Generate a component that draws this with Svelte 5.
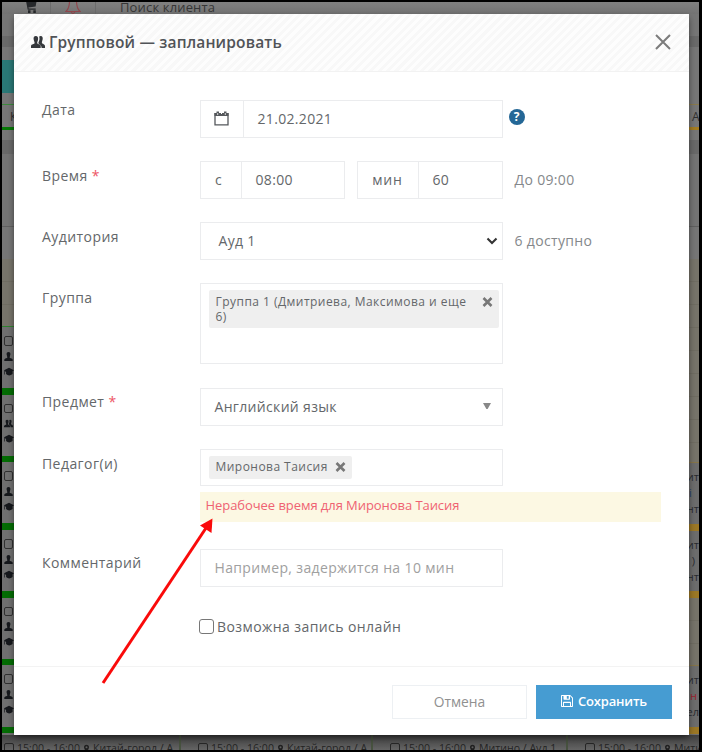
<script>
  const lessons = [
    { group: false }, { group: true }, { group: false },
    { group: false }, { group: false }, { group: false }
  ];
  const slots = [
    { text: '15:00 - 16:00', place: 'Китай-город / А' },
    { text: '15:00 - 16:00', place: 'Китай-город / А' },
    { text: '15:00 - 16:00', place: 'Митино / Ауд 1' },
    { text: '15:00 - 16:00', place: 'Митино / Ауд' }
  ];
</script>

{#snippet person()}
  <svg class="person" viewBox="0 0 12 12"><path d="M6 0C3.9 0 3.3 1.5 3.5 3.3C3.7 4.9 4.4 6 4.5 7.3C4.5 8.3 1 8.300.4 10V12H11.6V10C11 8.300 7.500 8.300 7.5 7.3C7.6 6 8.3 4.9 8.5 3.3C8.7 1.5 8.1 0 6 0Z" /></svg>
{/snippet}

{#snippet people()}
  <svg class="people" viewBox="0 0 14 12"><path d="M4.8 0C2.9 0 2.4 1.4 2.6 3.1C2.8 4.9 3.6 5.8 3.6 7C3.5 8.2.3 8 0 10V12H9.7V10C9.4 8 6.3 8.2 6.2 7C6.2 5.8 7 4.9 7.1 3.1C7.3 1.4 6.8 0 4.8 0ZM8.1.8C8.5.3 9 0 9.7 0C11.5 0 11.9 1.5 11.7 3.1C11.5 4.7 10.9 5.6 10.9 6.8C11 8 13.8 8 14 10V12H10.6C10.6 9.8 9.7 8.7 7.4 7.4C7.3 6.1 8.4 5 8.5 3.1C8.6 2.1 8.4 1.4 8.1.8Z" /></svg>
{/snippet}

{#snippet cross()}
  <svg class="cross" viewBox="0 0 11 10"><path d="M1.500 1L9.500 9M9.500 1L1.500 9" /></svg>
{/snippet}

<div class="frame">
  <div class="topbar">
    <svg class="cart" viewBox="0 0 12 13"><path d="M0 0H11.6L10.6 5.5L3.4 6.4L3.7 7.5H10.7V8.7H2.7L1 0ZM3 9.3H5.5V12H3ZM8.3 9.3H10.8V12H8.3Z" /></svg>
    <i></i>
    <svg class="bell" viewBox="0 0 16 13"><path d="M4.5 0C4.3 4 3.8 7 1 9.5H15C12.2 7 11.7 4 11.5 0M6.2 10Q8 13 9.8 10" /></svg>
    <i></i>
    <span>Поиск клиента</span>
  </div>

  <div class="middle">
    <div class="strip left">
      <div class="b1"></div><div class="b2"></div><div class="b3"></div>
      <div class="teal"></div><div class="b4"></div>
      <div class="head">К</div>
      <div class="b5"></div><div class="b6"></div><div class="b7"></div><div class="b8"></div>
      <div class="tan"></div>
      {#each lessons as lesson}
        <div class="lesson">
          <b></b>
          {#if lesson.group}{@render people()}{:else}{@render person()}{/if}
          <svg class="cap" viewBox="0 0 12 10"><path d="M6 0L12 3L10.3 4V7.5Q6 11 2.5 7.5V5L1.2 4.2V8H.4V3.4L0 3Z" /></svg>
          <em></em>
        </div>
      {/each}
    </div>

    <section class="modal">
      <header>
        {@render people()}
        <h1>Групповой — запланировать</h1>
        <svg class="close" viewBox="0 0 16 16"><path d="M1 1L15 15M15 1L1 15" /></svg>
      </header>

      <div class="body">
        <div class="row date">
          <label for="date">Дата</label>
          <div class="box addon cal">
            <svg viewBox="0 0 15 15"><path class="line" d="M1 2.7H14V13.8H1Z" /><path d="M.5 2H14.5V5H.5ZM2.500 0.500H5V2H2.500ZM10 0.500H12.500V2H10Z" /><path class="dots" d="M3.7 2.300V3.800M7.5 1.8V3M11.3 2.300V3.800" /></svg>
          </div>
          <div class="box value grow" id="date"><span>21.02.2021</span></div>
          <div class="help">?</div>
        </div>

        <div class="row time">
          <label for="time">Время <sup>*</sup></label>
          <div class="box addon from">с</div>
          <div class="box value start" id="time"><span>08:00</span></div>
          <div class="box addon min">мин</div>
          <div class="box value length"><span>60</span></div>
          <div class="note">До 09:00</div>
        </div>

        <div class="row room">
          <label for="room">Аудитория</label>
          <div class="box value full select" id="room">
            <span>Ауд 1</span>
            <svg viewBox="0 0 12 8"><path d="M1.5 1.5L6 6L10.5 1.5" /></svg>
          </div>
          <div class="note">6 доступно</div>
        </div>

        <div class="row group">
          <label for="group">Группа</label>
          <div class="box tags" id="group">
            <div class="tag wide"><span>Группа 1 (Дмитриева, Максимова и еще<br />6)</span>{@render cross()}</div>
          </div>
        </div>

        <div class="row subject">
          <label for="subject">Предмет <sup>*</sup></label>
          <div class="box value full" id="subject">
            <span>Английский язык</span>
            <svg class="tri" viewBox="0 0 8 6"><path d="M0 0H8L4.6 6H3.4Z" /></svg>
          </div>
        </div>

        <div class="row teacher">
          <label for="teacher">Педагог(и)</label>
          <div class="box tags" id="teacher">
            <div class="tag"><span>Миронова Таисия</span>{@render cross()}</div>
          </div>
        </div>
        <div class="warn"><span>Нерабочее время для Миронова Таисия</span></div>

        <div class="row comment">
          <label for="comment">Комментарий</label>
          <div class="box value full" id="comment"><span>Например, задержится на 10 мин</span></div>
        </div>

        <div class="online"><b></b><span>Возможна запись онлайн</span></div>
      </div>

      <footer>
        <button class="cancel"><span>Отмена</span></button>
        <button class="save">
          <svg viewBox="0 0 12 12"><path fill-rule="evenodd" d="M.8 0H9.2L12 2.8V11.2Q12 12 11.2 12H.8Q0 12 0 11.2V.8Q0 0 .8 0ZM1 1V11H2V7.4Q2 6.8 2.6 6.8H9.4Q10 6.8 10 7.4V11H11V3.2L9 1.1V4Q9 4.7 8.3 4.7H3.2Q2.5 4.7 2.5 4V1ZM5.8 1V3.7H7.7V1ZM3 7.9V11H9V7.9Z" /></svg>
          <span>Сохранить</span>
        </button>
      </footer>
    </section>

    <div class="strip right">
      <div class="b1"></div><div class="b2"></div><div class="b9"></div>
      <div class="head">А</div>
      <div class="b5"></div><div class="b6"></div><div class="b7"></div><div class="b8"></div>
      <div class="tan"></div>
      <div class="card"><span>ит</span><span class="blue">і</span><span>нт</span></div>
      <div class="card"><span>ит</span><span class="paren">)</span><span>нт</span></div>
      <div class="tan short"></div>
      <div class="card last"><span>ит</span><span class="red">н</span><span>ел</span></div>
    </div>
  </div>

  <div class="bottom">
    {#each slots as slot}
      <div class="slot">
        <b></b><span>{slot.text}</span>
        <svg viewBox="0 0 6 9"><path fill-rule="evenodd" d="M3 0C1 0 0 1.3 0 3C0 5.4 3 9 3 9S6 5.4 6 3C6 1.3 5 0 3 0ZM3 1.7A1.2 1.2 0 1 1 3 4.1A1.2 1.2 0 1 1 3 1.7" /></svg>
        <span class="place">{slot.place}</span>
      </div>
    {/each}
  </div>

  <svg class="arrow" viewBox="0 0 120 172"><path class="shaft" d="M3 168L106 13" /><path d="M112.500 3.500L111.500 18L100 10.500Z" /></svg>
</div>

<style>
  * { box-sizing: border-box; }
  .frame {
    position: relative; width: 702px; height: 752px; overflow: hidden;
    border: solid #000; border-width: 2px 3px 2px 2px;
    font-family: "Open Sans", "Noto Sans", sans-serif; color: #64676a;
    background: #676767; display: flex; flex-direction: column;
  }
  svg { display: block; flex: none; }

  .topbar { height: 12px; flex: none; display: flex; background: linear-gradient(#808080, #737373); overflow: hidden; }
  .cart { width: 12px; height: 13px; margin-left: 23px; margin-top: -1px; fill: #26282b; }
  .topbar i { width: 1px; height: 12px; background: #6c6c6c; }
  .cart + i { margin-left: 13px; }
  .bell { width: 16px; height: 13px; margin: 0 14px 0 14px; fill: none; stroke: #90484e; stroke-width: 1.2; }
  .topbar span { margin-left: 24px; margin-top: -4px; font-size: 13px; line-height: 18px; color: #363636; letter-spacing: .15px; white-space: nowrap; }

  .middle { display: flex; height: 721px; flex: none; }
  .strip { flex: none; height: 721px; overflow: hidden; background: #707070; }
  .left { width: 12px; }
  .right { width: 10px; }
  .b1 { height: 22px; background: #767676; }
  .b2 { height: 11px; background: #6a6a6a; }
  .b3 { height: 13px; background: #777; }
  .b9 { height: 58px; background: #777; border-bottom: 1px solid #8a7a4c; }
  .teal { height: 33px; background: #2a7876; }
  .b4 { height: 12px; background: #777; border-bottom: 1px solid #3c8a3c; }
  .head { height: 22px; font-size: 12px; line-height: 23px; padding-left: 8px; color: #303030; background: #777; }
  .right .head { padding-left: 3px; }
  .b5 { height: 3px; background: #077a07; }
  .right .b5 { background: #a57d22; }
  .b6 { height: 10px; background: #777; }
  .b7 { height: 14px; background: #696969; }
  .b8 { height: 105px; background: linear-gradient(#747474 72px, #606060 72px, #606060 73px, #767676 73px); }
  .tan { height: 68px; background: repeating-linear-gradient(#77746a 0 22px, #706d62 22px 23px); }
  .left .tan { border-bottom: 1px solid #2f822f; }
  .right .tan { height: 204px; border-bottom: 1px solid #867549; }
  .right .short { height: 68px; }

  .lesson { height: 67.7px; display: flex; flex-direction: column; align-items: flex-start; padding: 9px 0 0 2px; }
  .lesson b { width: 9px; height: 10px; border: 1px solid #303030; border-radius: 2px; }
  .lesson .person, .lesson .people { width: 9px; height: 11px; margin-top: 5px; fill: #16181c; }
  .cap { width: 10px; height: 10px; margin-top: 5px; fill: #16181c; }
  .lesson em { width: 12px; height: 7px; margin: 11.500px 0 0 -2px; background: #046c04; }

  .card { height: 67.500px; padding-top: 7px; border-bottom: 7px solid #9c7826; background: #6d6d6d; overflow: hidden; font-size: 11px; color: #292b30; }
  .card span { display: flex; justify-content: flex-end; height: 16px; line-height: 14px; white-space: nowrap; width: 10px; overflow: hidden; }
  .card .blue { color: #24416a; justify-content: flex-start; }
  .card .paren { padding-right: 4px; }
  .card .red { color: #9c2430; padding-right: 2px; }

  .modal {
    width: 675px; height: 721px; background: #fff; flex: none; position: relative;
    box-shadow: 0 3px 7px -1px rgba(0, 0, 0, .6); display: flex; flex-direction: column;
  }
  header {
    height: 58px; flex: none; display: flex; align-items: center; padding: 0 18px 1px 17px; border-bottom: 1px solid #f2f2f2;
    background: repeating-linear-gradient(135deg, #fdfdfd 0 3px, #f8f8f8 3px 6px);
  }
  header .people { width: 14px; height: 12px; fill: #35383c; }
  h1 { font-size: 15.500px; font-weight: 600; color: #505357; margin: 0 auto 0 4px; line-height: 22px; white-space: nowrap; letter-spacing: .16px; }
  .close { width: 16px; height: 16px; fill: none; stroke: #7c7c7c; stroke-width: 2; margin-top: -1px; }

  .body { flex: none; height: 594px; padding: 28px 0 0 28px; }
  .row { display: flex; height: 37.500px; font-size: 14px; letter-spacing: .33px; }
  .row label { width: 157.500px; flex: none; line-height: 20px; height: 20px; white-space: nowrap; letter-spacing: .43px; margin-top: 5px; }
  .date label { margin-top: 0; }
  sup { color: #ed5565; font-size: 14px; line-height: 0; vertical-align: baseline; }
  .box { border: 1px solid #ebecee; background: #fff; flex: none; display: flex; }
  .value { align-items: center; padding-left: 14px; }
  .value span { white-space: nowrap; }
  .addon { justify-content: center; align-items: center; border-right: 0; }
  .full { width: 303px; }
  .time, .room, .group, .subject { margin-top: 23.500px; }
  .cal { width: 43px; }
  .cal svg { width: 15px; height: 15px; fill: #55585c; }
  .cal .line { fill: none; stroke: #55585c; stroke-width: 1.300; }
  .cal .dots { stroke: #fff; stroke-width: 1; }
  .grow { width: 260px; }
  .help { width: 16px; height: 16px; margin: 9px 0 0 6px; border-radius: 50%; background: #246796; color: #fff; font-size: 12px; font-weight: 700; line-height: 16px; text-align: center; letter-spacing: 0; }
  .from { width: 41px; padding-right: 4px; }
  .start { width: 104px; }
  .min { width: 61px; margin-left: 12px; letter-spacing: .9px; }
  .length { width: 85px; }
  .note { line-height: 37px; margin-left: 12px; color: #85888b; white-space: nowrap; }
  .room .value { padding-left: 18px; }
  .select svg { width: 12px; height: 8px; margin: 0 4px 0 auto; fill: none; stroke: #333; stroke-width: 2.100; }
  .group { height: 81px; }
  .tags { width: 303px; padding: 6px 0 0 8px; align-items: flex-start; }
  .tag { background: #efefef; border-radius: 2px; height: 23px; display: flex; padding: 3px 6px 0 7px; font-size: 12px; line-height: 15px; white-space: nowrap; letter-spacing: .46px; }
  .wide { width: 290px; height: 38px; padding-top: 4px; justify-content: space-between; }
  .cross { width: 11px; height: 10px; margin-top: 3px; margin-left: 7px; fill: none; stroke: #777; stroke-width: 2.600; }
  .subject { height: 38.500px; }
  .subject label { margin-top: 4px; }
  .subject .value { padding-bottom: 1px; }
  .tri { width: 8px; height: 6px; margin: 0 11px 0 auto; fill: #888; }
  .teacher { margin-top: 23px; height: 37px; }
  .warn { width: 461px; height: 30px; margin: 6px 0 0 157.500px; padding-left: 6px; background: #fcf8e3; color: #ef6272; font-size: 13px; line-height: 27px; white-space: nowrap; letter-spacing: -.06px; }
  .comment { margin-top: 27px; }
  .comment label { margin-top: 4px; }
  .comment .value { color: #a0a0a0; letter-spacing: .36px; }
  .online { display: flex; margin: 31.500px 0 0 157px; height: 16px; align-items: center; font-size: 14px; white-space: nowrap; letter-spacing: .42px; }
  .online b { width: 15px; height: 15px; border: 1px solid #777; border-radius: 3px; margin-right: 3px; }

  footer { flex: none; height: 69px; border-top: 1px solid #f3f3f3; display: flex; padding: 18px 17px 0 0; justify-content: flex-end; }
  button { height: 34px; margin: 0; padding: 0 0 2px; font-family: inherit; font-size: 13.800px; display: flex; align-items: center; justify-content: center; }
  .cancel { width: 135px; border: 1px solid #edf0f3; background: #fff; color: #909090; margin-right: 9px; }
  .save { width: 136px; border: 0; background: #469cd2; color: #fff; font-weight: 600; font-size: 13px; letter-spacing: -.18px; }
  .save svg { width: 12px; height: 12px; fill: #fff; margin-right: 5px; }

  .bottom { height: 15px; flex: none; display: grid; grid-template-columns: 179px 192px 195px 195px; overflow: hidden; background: linear-gradient(#404040, #646464); }
  .slot { display: flex; white-space: nowrap; font-size: 10.600px; line-height: 14px; padding: 6px 0 0 2px; color: #242424; border-right: 2px solid #47523f; overflow: hidden; }
  .slot + .slot { padding-left: 17px; }
  .slot b { width: 10px; height: 11px; margin: 2px 3px 0 0; border: 1px solid #262626; border-radius: 2px; flex: none; }
  .slot svg { width: 5px; height: 9px; margin: 3px 4px 0 4px; fill: #202020; }

  .arrow { position: absolute; left: 98px; top: 513px; width: 120px; height: 172px; fill: #fa0a0a; }
  .shaft { fill: none; stroke: #fa0a0a; stroke-width: 3; }
</style>
